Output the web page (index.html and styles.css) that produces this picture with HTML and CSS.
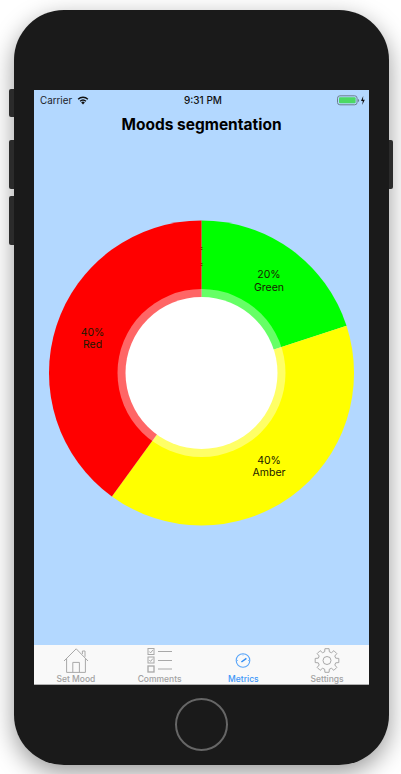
FILE: index.html
```html
<!DOCTYPE html>
<html lang="en">
<head>
<meta charset="utf-8">
<title>Moods segmentation</title>
<link rel="stylesheet" href="styles.css">
</head>
<body>
<div class="phone">
  <span class="side-btn side-mute"></span>
  <span class="side-btn side-up"></span>
  <span class="side-btn side-down"></span>
  <span class="side-btn side-power"></span>
  <div class="screen">
    <div class="status">
      <div class="status-left">
        <span>Carrier</span>
        <svg class="wifi" viewBox="0 0 14 10" width="12" height="9"><path d="M7 9.6 4.9 7.3a3 3 0 0 1 4.2 0Z" fill="#111"/><path d="M3.6 5.9a5 5 0 0 1 6.8 0M1.3 3.5a8.3 8.3 0 0 1 11.4 0" fill="none" stroke="#111" stroke-width="1.6"/></svg>
      </div>
      <div class="status-time">9:31 PM</div>
      <div class="status-right">
        <svg viewBox="0 0 28 11" width="28" height="11"><rect x="0.5" y="0.8" width="19.6" height="9" rx="2.4" fill="none" stroke="#6c7f8e" stroke-width="1"/><rect x="2" y="2.3" width="16.6" height="6" rx="1" fill="#4cd964"/><path d="M21 4v3a1.6 1.6 0 0 0 0-3Z" fill="#6c7f8e"/><path d="M26.2 1 24 6h1.8l-.6 4 2.6-5.2h-1.8Z" fill="#111"/></svg>
      </div>
    </div>
    <h1 class="title">Moods segmentation</h1>
    <div class="chart">
      <svg class="donut" viewBox="-167.5 -155 335 310" width="335" height="310">
        <path d="M0 0V-152.5A152.5 152.5 0 0 1 145.04 -47.13Z" fill="#00ff00"/>
        <path d="M0 0L145.04 -47.13A152.5 152.5 0 0 1 -89.64 123.38Z" fill="#ffff00"/>
        <path d="M0 0L-89.64 123.38A152.5 152.5 0 0 1 0 -152.5Z" fill="#ff0000"/>
        <circle r="84" fill="#fff" fill-opacity="0.4"/>
        <circle r="76" fill="#fff"/>
        <path d="M-0.6 -125.5h1.6M-0.6 -123.5h1.6M-0.6 -109.5h1.6M-0.6 -107.5h1.6" stroke="#700" stroke-width="0.7"/>
        <text class="slice-label" x="67.5" y="-95">20%</text>
        <text class="slice-label" x="67.5" y="-82.5">Green</text>
        <text class="slice-label" x="67.5" y="91">40%</text>
        <text class="slice-label" x="67.5" y="103">Amber</text>
        <text class="slice-label" x="-109" y="-37.5">40%</text>
        <text class="slice-label" x="-109" y="-25">Red</text>
      </svg>
    </div>
    <nav class="tabs">
      <div class="tab">
        <svg class="tab-icon" viewBox="0 0 26 25" width="26" height="25" fill="none" stroke="#a8a8a8" stroke-width="1"><path d="M1 13 13.2 0.8 25 13"/><path d="M3.6 10.4V24.4H22.4V10.4M9.8 24.4V14.4H16.4V24.4M19.4 6V3H22V8.8"/></svg>
        <span class="tab-label">Set Mood</span>
      </div>
      <div class="tab">
        <svg class="tab-icon" viewBox="0 0 26 25" width="26" height="25" fill="none" stroke="#a8a8a8" stroke-width="1"><rect x="1" y="0.5" width="6" height="6"/><rect x="1" y="9" width="6" height="6"/><rect x="1" y="18" width="6" height="6" stroke-width="1.3"/><path d="M2.3 3.5 3.6 4.9 5.8 2.1M2.3 12 3.6 13.4 5.8 10.6M11 3.5H25M11 12.5H25M11 21H25"/></svg>
        <span class="tab-label">Comments</span>
      </div>
      <div class="tab tab-active">
        <svg class="tab-icon" viewBox="0 0 26 25" width="26" height="25" fill="none" stroke="#5aa6f9" stroke-width="1.1"><circle cx="13" cy="12.5" r="6.8"/><path d="M11.4 14 16.4 10.4" stroke="#2f8cf5" stroke-width="1.5"/><path d="M13 6.4V7.6M7 12.5H8M18 12.5H19" stroke-width="0.7"/></svg>
        <span class="tab-label">Metrics</span>
      </div>
      <div class="tab">
        <svg class="tab-icon" viewBox="-13 -12.5 26 25" width="26" height="25" fill="none" stroke="#a8a8a8" stroke-width="1" stroke-linejoin="round"><circle r="4"/><polygon points="-2.33,-8.69 -2.08,-11.82 2.08,-11.82 2.33,-8.69 4.5,-7.79 6.89,-9.83 9.83,-6.89 7.79,-4.5 8.69,-2.33 11.82,-2.08 11.82,2.08 8.69,2.33 7.79,4.5 9.83,6.89 6.89,9.83 4.5,7.79 2.33,8.69 2.08,11.82 -2.08,11.82 -2.33,8.69 -4.5,7.79 -6.89,9.83 -9.83,6.89 -7.79,4.5 -8.69,2.33 -11.82,2.08 -11.82,-2.08 -8.69,-2.33 -7.79,-4.5 -9.83,-6.89 -6.89,-9.83 -4.5,-7.79"/></svg>
        <span class="tab-label">Settings</span>
      </div>
    </nav>
  </div>
  <div class="home-row"><div class="home-btn"></div></div>
</div>
</body>
</html>
```
FILE: styles.css
```css
* { box-sizing: border-box; }
html, body { margin: 0; padding: 0; }
body {
  width: 401px;
  height: 774px;
  overflow: hidden;
  background: #fff;
  font-family: Inter, "Liberation Sans", sans-serif;
  padding: 10px 0 0 14px;
}
.phone {
  position: relative;
  width: 375px;
  height: 755px;
  padding: 80px 20px 0 20px;
  border-radius: 50px;
  background: #1a1a1a;
  box-shadow: 0 8px 24px rgba(0, 0, 0, 0.4);
}
.side-btn {
  position: absolute;
  width: 5px;
  background: #2b2b2b;
  border-radius: 2px 0 0 2px;
}
.side-mute { left: -5px; top: 79px; height: 28px; }
.side-up { left: -5px; top: 130px; height: 49px; }
.side-down { left: -5px; top: 186px; height: 49px; }
.side-power { right: -4px; width: 4px; top: 130px; height: 49px; border-radius: 0 2px 2px 0; }
.screen {
  width: 335px;
  height: 595px;
  background: #b3d8ff;
  display: flex;
  flex-direction: column;
}
.status {
  height: 20px;
  flex: none;
  display: grid;
  grid-template-columns: 1fr auto 1fr;
  align-items: center;
  padding: 0 4px 0 6px;
  font-size: 9.8px;
  color: #1c2228;
}
.status-left { display: flex; align-items: center; gap: 5px; }
.wifi { display: block; }
.status-time { font-size: 10px; font-weight: 500; color: #111; padding-left: 1px; }
.status-right { display: flex; justify-content: flex-end; }
.status-right svg { display: block; }
.title {
  margin: 5px 0 0;
  height: 20px;
  line-height: 20px;
  text-align: center;
  font-size: 15.5px;
  font-weight: 700;
  color: #000;
}
.chart {
  flex: 1;
  padding-top: 83px;
}
.donut { display: block; }
.slice-label {
  font-size: 10.5px;
  fill: #1a1a00;
  text-anchor: middle;
}
.tabs {
  flex: none;
  height: 40px;
  display: grid;
  grid-template-columns: repeat(4, 1fr);
  background: #f9f9f9;
  border-bottom: 1px solid #b0b0b0;
}
.tab {
  display: flex;
  flex-direction: column;
  align-items: center;
  padding-top: 3px;
  color: #a2a2a2;
}
.tab-icon { display: block; flex: none; }
.tab-label {
  font-size: 8.5px;
  line-height: 10px;
  margin-top: 1px;
  font-weight: 500;
}
.tab-active { color: #3f97f8; }
.home-row {
  display: flex;
  justify-content: center;
  padding-top: 13px;
}
.home-btn {
  width: 53px;
  height: 53px;
  border: 2.5px solid #666;
  border-radius: 50%;
}
```
